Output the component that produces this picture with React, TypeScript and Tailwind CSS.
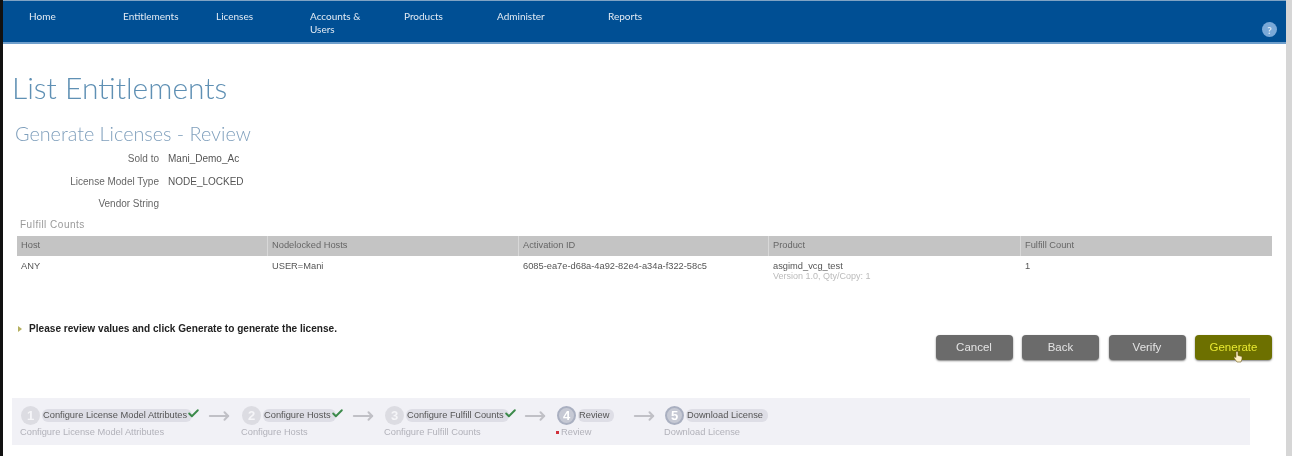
import { Check, MoveRight } from "lucide-react";

const navItems = [
  { label: "Home", width: "w-[94px]" },
  { label: "Entitlements", width: "w-[93px]" },
  { label: "Licenses", width: "w-[94px]" },
  { label: "Accounts & Users", width: "w-[94px]" },
  { label: "Products", width: "w-[93px]" },
  { label: "Administer", width: "w-[111px]" },
  { label: "Reports", width: "w-[90px]" },
];

const columns = [
  { label: "Host", width: "w-[251px]" },
  { label: "Nodelocked Hosts", width: "w-[251px]" },
  { label: "Activation ID", width: "w-[250px]" },
  { label: "Product", width: "w-[252px]" },
  { label: "Fulfill Count", width: "flex-1" },
];

const steps = [
  { n: 1, title: "Configure License Model Attributes", sub: "Configure License Model Attributes", done: true, box: "w-[187px]", gap: "w-[34px]" },
  { n: 2, title: "Configure Hosts", sub: "Configure Hosts", done: true, box: "w-[110px]", gap: "w-[33px]" },
  { n: 3, title: "Configure Fulfill Counts", sub: "Configure Fulfill Counts", done: true, box: "w-[139px]", gap: "w-[33px]" },
  { n: 4, title: "Review", sub: "Review", done: false, active: true, box: "w-[76px]", gap: "w-[32px]" },
  { n: 5, title: "Download License", sub: "Download License", done: false, box: "w-[106px]", gap: "" },
];

function Button({ label, hot }: { label: string; hot?: boolean }) {
  return (
    <div
      className={`relative flex h-[25px] w-[77px] items-center justify-center rounded-[4px] text-[11.5px] shadow-[0_1px_2px_rgba(0,0,0,0.5)] ${
        hot ? "bg-[#6d7000] text-[#e8e830]" : "bg-[#6b6b6b] text-[#e4e4e4]"
      }`}
    >
      {label}
      {hot && (
        <svg className="absolute left-[38px] top-[15px] h-[13px] w-[10px]" viewBox="0 0 10 13">
          <path d="M3 1.500v6L1.500 6.500 1 8l3 4h4l1-3V6.500L5 5.500V1.500z" fill="#fff3c8" stroke="#6b5a20" strokeWidth="0.6" />
        </svg>
      )}
    </div>
  );
}

export default function App() {
  return (
    <div className="flex h-[456px] w-[1292px] overflow-hidden bg-white font-['Liberation_Sans',sans-serif] text-[9.3px] text-[#444] blur-[0.5px]">
      <div className="w-[3px] shrink-0 bg-[#111]" />
      <div className="flex min-w-0 flex-1 flex-col">
        {/* Nav */}
        <div className="flex h-[44px] shrink-0 border-t border-b-2 border-t-[#7fa3c4] border-b-[#6f9fcc] bg-[#004f94] pl-[26px] pr-[9px] pt-[9px] font-['Lato',sans-serif] text-[10px] leading-[13px] text-[#e2ebf4]">
          {navItems.map((item) => (
            <div key={item.label} className={`${item.width} shrink-0 pr-[30px]`}>
              {item.label}
            </div>
          ))}
          <div className="ml-auto mt-[12px] flex h-[15px] w-[15px] items-center justify-center rounded-full bg-[#7aa9d8] text-[10px] font-bold leading-none text-[#dce9f5]">
            ?
          </div>
        </div>

        {/* Content */}
        <div className="flex-1 pl-[9px] pr-[14px]">
          <h1 className="mt-[25px] font-['Lato',sans-serif] text-[30px] font-light leading-[36px] text-[#5f90b4]">
            List Entitlements
          </h1>
          <h2 className="ml-[3px] mt-[16px] font-['Lato',sans-serif] text-[19.8px] font-light leading-[24px] text-[#7f9fbc]">
            Generate Licenses - Review
          </h2>

          <div className="mt-[8px] flex flex-col gap-[11.5px] text-[10px] leading-[11px]">
            <div className="flex">
              <div className="w-[147px] text-right text-[#666]">Sold to</div>
              <div className="ml-[9px] text-[#555]">Mani_Demo_Ac</div>
            </div>
            <div className="flex">
              <div className="w-[147px] text-right text-[#666]">License Model Type</div>
              <div className="ml-[9px] text-[#555]">NODE_LOCKED</div>
            </div>
            <div className="flex">
              <div className="w-[147px] text-right text-[#666]">Vendor String</div>
            </div>
          </div>

          <div className="ml-[8px] mt-[10px] text-[10px] leading-[11px] tracking-[0.5px] text-[#999]">Fulfill Counts</div>

          <div className="ml-[5px] mt-[6px]">
            <div className="flex h-[20px] items-center bg-[#c4c4c4] text-[#666]">
              {columns.map((c) => (
                <div key={c.label} className={`${c.width} flex h-full items-center border-r border-[#d8d8d8] pl-[4px] last:border-r-0`}>
                  {c.label}
                </div>
              ))}
            </div>
            <div className="flex pt-[5px] leading-[11px] text-[#555]">
              <div className="w-[251px] pl-[4px]">ANY</div>
              <div className="w-[251px] pl-[4px]">USER=Mani</div>
              <div className="w-[250px] whitespace-nowrap pl-[4px]">6085-ea7e-d68a-4a92-82e4-a34a-f322-58c5</div>
              <div className="w-[252px] pl-[4px]">
                <div>asgimd_vcg_test</div>
                <div className="text-[9px] leading-[9px] text-[#bbb]">Version 1.0, Qty/Copy: 1</div>
              </div>
              <div className="flex-1 pl-[4px]">1</div>
            </div>
          </div>

          <div className="mt-[42px] flex items-start">
            <div className="ml-[6px] mt-[3px] h-0 w-0 border-y-[3px] border-l-[4px] border-y-transparent border-l-[#b5b060]" />
            <div className="ml-[7px] text-[10.1px] font-bold leading-[11px] text-[#222]">
              Please review values and click Generate to generate the license.
            </div>
          </div>

          <div className="mt-[1px] flex justify-end gap-[9.500px]">
            <Button label="Cancel" />
            <Button label="Back" />
            <Button label="Verify" />
            <Button label="Generate" hot />
          </div>

          {/* Wizard steps */}
          <div className="mr-[22px] mt-[38px] flex h-[47px] items-start bg-[#f1f1f6] pl-[9px] pt-[8px]">
            {steps.map((s) => (
              <div key={s.n} className="flex">
                <div className={s.box}>
                  <div className="relative flex h-[19px] items-center">
                    <div
                      className={`flex h-[19px] w-[19px] shrink-0 items-center justify-center rounded-full text-[13px] font-bold ${
                        s.done ? "bg-[#dcdce2] text-[#f5f5f8]" : "border-2 border-[#a9afc0] bg-[#c6c9d4] text-white"
                      }`}
                    >
                      {s.n}
                    </div>
                    <div className="ml-[2px] whitespace-nowrap rounded-[6px] bg-[#dedee6] pl-[1px] pr-[5px] text-[9.3px] leading-[13px] text-[#555]">
                      {s.title}
                    </div>
                    {s.done && (
                      <Check className="-ml-[5px] -mt-[4px] h-[13px] w-[13px] shrink-0 text-[#3b8a4a]" strokeWidth={3.5} />
                    )}
                  </div>
                  <div className="-ml-[1px] mt-[2px] flex items-center whitespace-nowrap text-[9.3px] leading-[11px] text-[#b2b2ba]">
                    {s.active && <span className="mr-[2px] h-[3px] w-[3px] bg-[#d0303a]" />}
                    {s.sub}
                  </div>
                </div>
                {s.gap && (
                  <div className={`${s.gap} text-[#c0c0c6]`}>
                    <MoveRight className="-mt-[1px] h-[22px] w-[22px]" strokeWidth={2.2} />
                  </div>
                )}
              </div>
            ))}
          </div>
        </div>
      </div>
      <div className="w-[6px] shrink-0 bg-[#d6d6d6]" />
    </div>
  );
}
